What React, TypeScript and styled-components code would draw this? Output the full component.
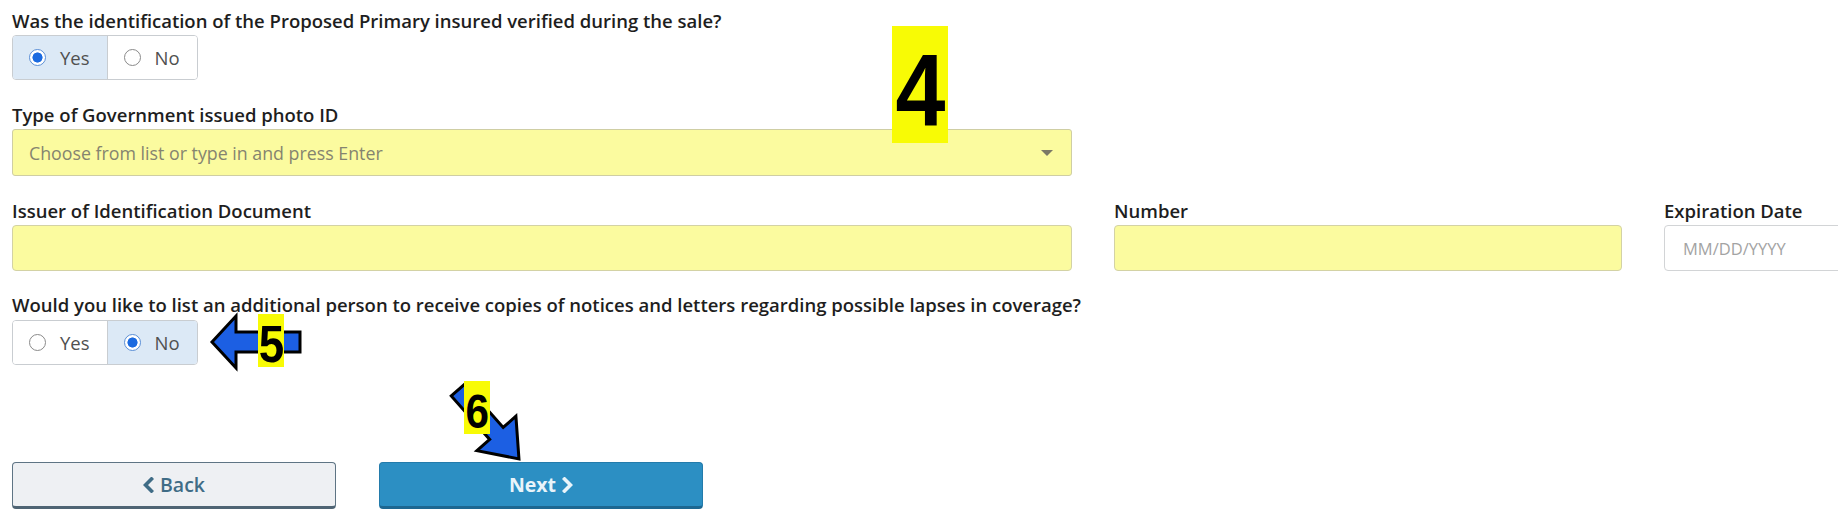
import React from "react"
import styled, { createGlobalStyle } from "styled-components"

const GlobalStyle = createGlobalStyle`
	html, body {
		margin: 0;
		padding: 0;
		background: #ffffff;
	}
	body {
		font-family: "Open Sans", "Noto Sans", Arial, sans-serif;
		color: #1d1d1d;
	}
`

const Page = styled.div`
	position: relative;
	width: 1838px;
	height: 524px;
	overflow: hidden;
	padding: 9px 0 0 12px;
	box-sizing: border-box;
	background: #fff;
`

const Section = styled.div<{ $gap?: number }>`
	display: flex;
	flex-direction: column;
	align-items: flex-start;
	margin-bottom: ${(p) => (p.$gap !== undefined ? p.$gap : 23)}px;
`

const Label = styled.label<{ $space?: number }>`
	display: block;
	font-size: 18.5px;
	font-weight: 600;
	line-height: 24px;
	color: #1e1e1e;
	margin-bottom: ${(p) => (p.$space !== undefined ? p.$space : 2)}px;
	white-space: nowrap;
`

const RadioGroup = styled.div`
	display: flex;
	height: 45px;
	box-sizing: border-box;
	border: 1px solid #c9cdd1;
	border-radius: 4px;
	overflow: hidden;
	background: #fff;
`

const RadioOption = styled.div<{ $checked: boolean }>`
	display: flex;
	align-items: center;
	gap: 14px;
	padding: 0 17px 0 16px;
	font-size: 18.5px;
	color: #505050;
	background: ${(p) => (p.$checked ? "#dce9f6" : "#ffffff")};
	& + & {
		border-left: 1px solid #c9cdd1;
	}
`

const RadioDot = styled.span<{ $checked: boolean }>`
	width: 17px;
	height: 17px;
	border-radius: 50%;
	box-sizing: border-box;
	flex-shrink: 0;
	border: ${(p) => (p.$checked ? "1.5px solid #5b8fd6" : "1px solid #8a8a8a")};
	background: ${(p) =>
		p.$checked
			? "radial-gradient(circle, #1b6ae0 0 4.8px, #ffffff 5.3px)"
			: "#ffffff"};
`

const SelectBox = styled.div`
	width: 1060px;
	height: 47px;
	box-sizing: border-box;
	display: flex;
	align-items: center;
	padding: 0 18px 0 16px;
	background: #fbfb9f;
	border: 1px solid #cfcea3;
	border-radius: 3px;
	font-size: 17.8px;
	color: #85846f;
`

const Caret = styled.span`
	margin-left: auto;
	width: 0;
	height: 0;
	border-left: 6px solid transparent;
	border-right: 6px solid transparent;
	border-top: 6px solid #7b7966;
`

const FieldGrid = styled.div`
	display: grid;
	grid-template-columns: 1060px 508px 220px;
	column-gap: 42px;
	margin-bottom: 22px;
`

const Field = styled.div`
	display: flex;
	flex-direction: column;
`

const TextBox = styled.div<{ $yellow?: boolean }>`
	height: 46px;
	box-sizing: border-box;
	display: flex;
	align-items: center;
	padding: 0 18px;
	border-radius: 4px;
	font-size: 16.5px;
	color: #a3a3a3;
	background: ${(p) => (p.$yellow ? "#fbfb9f" : "#ffffff")};
	border: 1px solid ${(p) => (p.$yellow ? "#d3d2a5" : "#d2d4d6")};
`

const ButtonRow = styled.div`
	display: flex;
	gap: 43px;
	margin-top: 97px;
`

const NavButton = styled.button<{ $primary?: boolean }>`
	width: 324px;
	height: 47px;
	box-sizing: border-box;
	display: flex;
	align-items: center;
	justify-content: center;
	gap: 6px;
	font-family: "Open Sans", Arial, sans-serif;
	font-size: 19.5px;
	font-weight: ${(p) => (p.$primary ? 700 : 600)};
	border-radius: 4px;
	cursor: pointer;
	color: ${(p) => (p.$primary ? "#e9f4fa" : "#3f6c86")};
	background: ${(p) => (p.$primary ? "#2c8fc3" : "#eef0f3")};
	border: 1px solid ${(p) => (p.$primary ? "#237bab" : "#5e7484")};
	border-bottom: 3px solid ${(p) => (p.$primary ? "#1d6791" : "#4f6474")};
`

const Overlay = styled.svg`
	position: absolute;
	left: 0;
	top: 0;
	pointer-events: none;
`

const Badge = styled.div<{ $x: number; $y: number; $w: number; $h: number; $size: number; $pt: number }>`
	position: absolute;
	left: ${(p) => p.$x}px;
	top: ${(p) => p.$y}px;
	width: ${(p) => p.$w}px;
	height: ${(p) => p.$h}px;
	box-sizing: border-box;
	padding-top: ${(p) => p.$pt}px;
	background: #f8fb05;
	display: flex;
	justify-content: center;
	font-family: "Liberation Sans", Arial, sans-serif;
	font-weight: 700;
	font-size: ${(p) => p.$size}px;
	line-height: 1;
	color: #000;
	span {
		display: inline-block;
		transform: scaleX(0.88);
	}
`

const Chevron = ({ dir }: { dir: "left" | "right" }) => (
	<svg width="11" height="16" viewBox="0 0 11 16">
		<polyline
			points={dir === "left" ? "8.5,2 2.5,8 8.5,14" : "2.5,2 8.5,8 2.5,14"}
			fill="none"
			stroke="currentColor"
			strokeWidth="3.6"
			strokeLinecap="square"
			strokeLinejoin="miter"
		/>
	</svg>
)

const Radio = ({ label, checked }: { label: string; checked: boolean }) => (
	<RadioOption $checked={checked}>
		<RadioDot $checked={checked} />
		<span>{label}</span>
	</RadioOption>
)

const App = () => {
	return (
		<>
			<GlobalStyle />
			<Page>
				<Section>
					<Label>Was the identification of the Proposed Primary insured verified during the sale?</Label>
					<RadioGroup>
						<Radio label="Yes" checked />
						<Radio label="No" checked={false} />
					</RadioGroup>
				</Section>

				<Section>
					<Label>Type of Government issued photo ID</Label>
					<SelectBox>
						Choose from list or type in and press Enter
						<Caret />
					</SelectBox>
				</Section>

				<FieldGrid>
					<Field>
						<Label>Issuer of Identification Document</Label>
						<TextBox $yellow />
					</Field>
					<Field>
						<Label>Number</Label>
						<TextBox $yellow />
					</Field>
					<Field>
						<Label>Expiration Date</Label>
						<TextBox>MM/DD/YYYY</TextBox>
					</Field>
				</FieldGrid>

				<Section $gap={0}>
					<Label $space={3}>
						Would you like to list an additional person to receive copies of notices and letters regarding possible lapses in coverage?
					</Label>
					<RadioGroup>
						<Radio label="Yes" checked={false} />
						<Radio label="No" checked />
					</RadioGroup>
				</Section>

				<ButtonRow>
					<NavButton>
						<Chevron dir="left" />
						Back
					</NavButton>
					<NavButton $primary>
						Next
						<Chevron dir="right" />
					</NavButton>
				</ButtonRow>

				<Overlay width="1838" height="524" viewBox="0 0 1838 524">
					<polygon
						points="212,342 236,316 236,332 300,332 300,352 236,352 236,368"
						fill="#1c5fe3"
						stroke="#000"
						strokeWidth="3"
					/>
					<g transform="translate(458,390) rotate(48.5)">
						<polygon
							points="0,-9 58,-9 58,-26 92,0 58,26 58,9 0,9"
							fill="#1c5fe3"
							stroke="#000"
							strokeWidth="3"
						/>
					</g>
				</Overlay>

				<Badge $x={892} $y={26} $w={56} $h={117} $size={102} $pt={13}>
					<span>4</span>
				</Badge>
				<Badge $x={258} $y={314} $w={26} $h={53} $size={52} $pt={4}>
					<span>5</span>
				</Badge>
				<Badge $x={464} $y={381} $w={26} $h={53} $size={48} $pt={7}>
					<span>6</span>
				</Badge>
			</Page>
		</>
	)
}

export default App
